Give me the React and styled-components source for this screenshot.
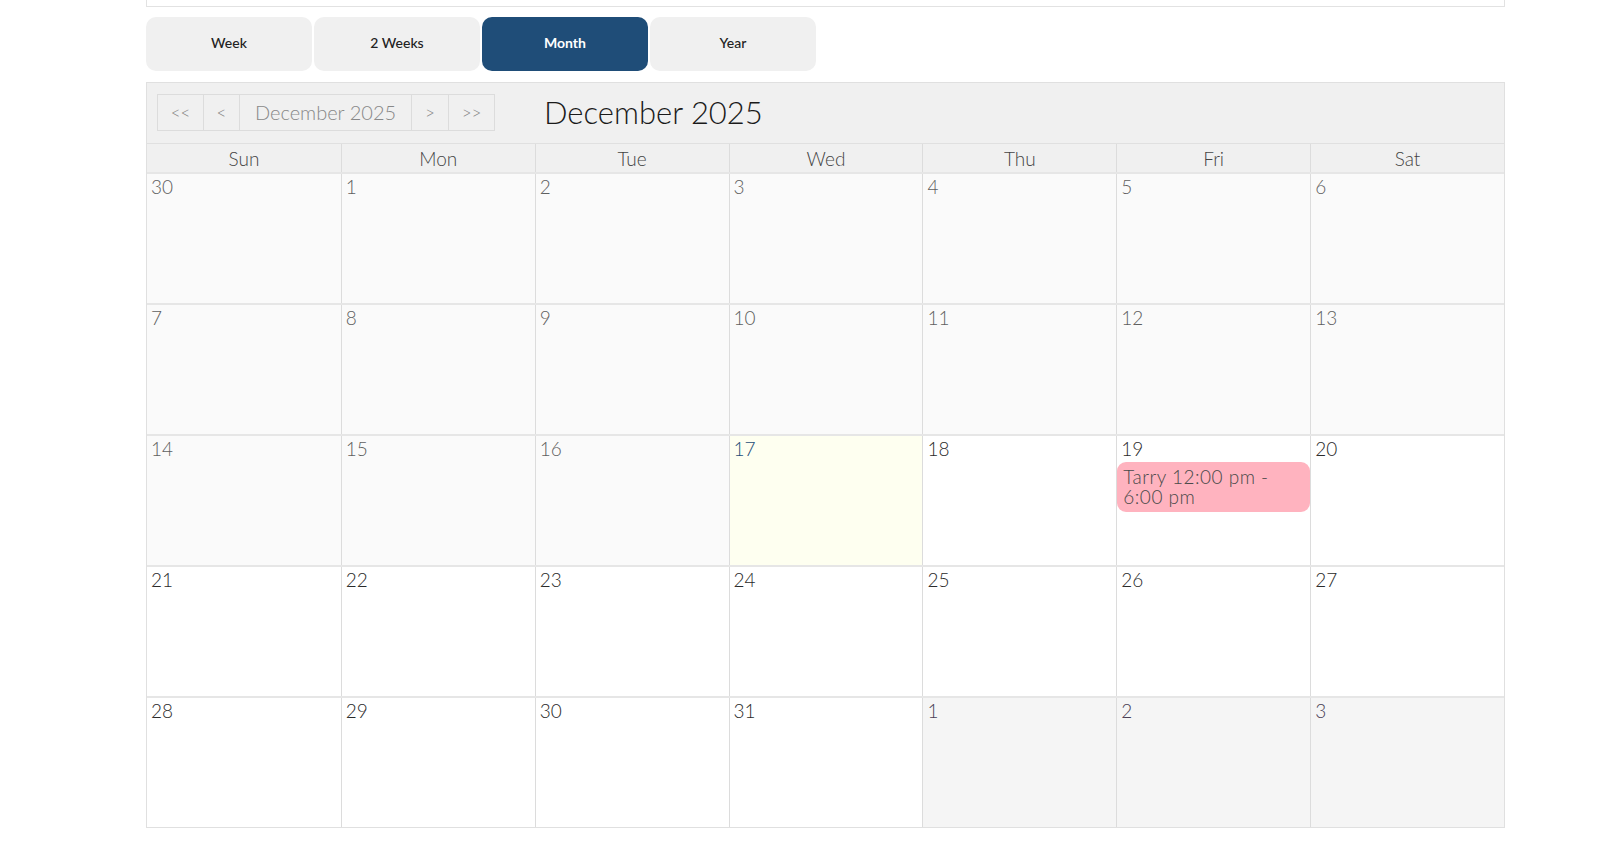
import React, { useState } from "react";
import styled, { createGlobalStyle } from "styled-components";

const GlobalStyle = createGlobalStyle`
  body {
    margin: 0;
    background: #ffffff;
    font-family: "Lato", "Noto Sans", sans-serif;
  }
`;

const Page = styled.div`
  width: 1359px;
  margin-left: 146px;
`;

const TopBox = styled.div`
  height: 6px;
  border: 1px solid #e2e2e2;
  border-top: none;
`;

const ViewBar = styled.div`
  display: flex;
  gap: 2px;
  margin: 10px 0 11px;
`;

const ViewBtn = styled.button`
  width: 166px;
  height: 54px;
  border: none;
  border-radius: 10px;
  padding: 0 0 3px;
  font-family: "Lato", "Noto Sans", sans-serif;
  font-size: 14px;
  font-weight: ${(p) => (p.active ? 700 : 500)};
  color: ${(p) => (p.active ? "#ffffff" : "#222")};
  background: ${(p) => (p.active ? "#1f4d78" : "#f0f0f0")};
  cursor: pointer;
`;

const Calendar = styled.div`
  border: 1px solid #e0e0e0;
`;

const Toolbar = styled.div`
  display: flex;
  align-items: center;
  height: 60px;
  padding-left: 11px;
  background: #f0f0f0;
`;

const NavGroup = styled.div`
  display: flex;
  margin-top: -2px;
`;

const NavBtn = styled.button`
  width: ${(p) => p.w}px;
  height: 37px;
  border: 1px solid #dcdcdc;
  margin-left: -1px;
  background: #f0f0f0;
  color: #888;
  font-family: "Lato", "Noto Sans", sans-serif;
  font-size: ${(p) => (p.label ? 20 : 17)}px;
  font-weight: 300;
  padding: 0;
  cursor: pointer;
`;

const Title = styled.h2`
  margin: -3px 0 0 49px;
  font-size: 31px;
  font-weight: 300;
  color: #1a1a1a;
`;

const HeadRow = styled.div`
  display: grid;
  grid-template-columns: repeat(7, 1fr);
  height: 28px;
  background: #f0f0f0;
  border-top: 1px solid #e0e0e0;
`;

const HeadCell = styled.div`
  display: flex;
  align-items: center;
  justify-content: center;
  font-size: 19px;
  font-weight: 300;
  color: #444;
  border-left: ${(p) => (p.first ? "none" : "1px solid #dcdcdc")};
`;

const Week = styled.div`
  display: grid;
  grid-template-columns: repeat(7, 1fr);
  height: 129px;
  border-top: 2px solid #e6e6e6;
`;

const tones = {
  past: { bg: "#fafafa", fg: "#5f5f5f" },
  today: { bg: "#fefff0", fg: "#1f4d78" },
  future: { bg: "#ffffff", fg: "#2a2a2a" },
  next: { bg: "#f5f5f5", fg: "#4a3f55" },
};

const Cell = styled.div`
  display: flex;
  flex-direction: column;
  padding: 2px 0 0 4px;
  background: ${(p) => tones[p.tone].bg};
  border-left: ${(p) => (p.first ? "none" : "1px solid #dcdcdc")};
  min-width: 0;
`;

const DayNum = styled.span`
  font-size: 19px;
  font-weight: 300;
  line-height: 22px;
  color: ${(p) => tones[p.tone].fg};
`;

const Event = styled.div`
  margin: 2px 0 0 -4px;
  padding: 5px 12px 5px 6px;
  border-radius: 9px;
  background: #ffb3bf;
  color: #4a4a4a;
  font-size: 19px;
  font-weight: 300;
  line-height: 20px;
  letter-spacing: 0.5px;
`;

const days = ["Sun", "Mon", "Tue", "Wed", "Thu", "Fri", "Sat"];

function buildWeeks() {
  const list = [{ d: 30, tone: "past" }];
  for (let d = 1; d <= 31; d++) {
    list.push({ d, tone: d < 17 ? "past" : d === 17 ? "today" : "future" });
  }
  for (let d = 1; d <= 3; d++) list.push({ d, tone: "next" });
  const weeks = [];
  for (let i = 0; i < list.length; i += 7) weeks.push(list.slice(i, i + 7));
  return weeks;
}

export default function App() {
  const [view, setView] = useState("Month");
  const weeks = buildWeeks();

  return (
    <Page>
      <GlobalStyle />
      <TopBox />
      <ViewBar>
        {["Week", "2 Weeks", "Month", "Year"].map((v) => (
          <ViewBtn key={v} active={view === v} onClick={() => setView(v)}>
            {v}
          </ViewBtn>
        ))}
      </ViewBar>

      <Calendar>
        <Toolbar>
          <NavGroup>
            <NavBtn w={47}>&lt;&lt;</NavBtn>
            <NavBtn w={37}>&lt;</NavBtn>
            <NavBtn w={173} label>
              December 2025
            </NavBtn>
            <NavBtn w={38}>&gt;</NavBtn>
            <NavBtn w={47}>&gt;&gt;</NavBtn>
          </NavGroup>
          <Title>December 2025</Title>
        </Toolbar>
        <HeadRow>
          {days.map((d, i) => (
            <HeadCell key={d} first={i === 0}>
              {d}
            </HeadCell>
          ))}
        </HeadRow>
        {weeks.map((w, wi) => (
          <Week key={wi}>
            {w.map((c, ci) => (
              <Cell key={ci} tone={c.tone} first={ci === 0}>
                <DayNum tone={c.tone}>{c.d}</DayNum>
                {c.d === 19 && c.tone === "future" && (
                  <Event>Tarry 12:00 pm - 6:00 pm</Event>
                )}
              </Cell>
            ))}
          </Week>
        ))}
      </Calendar>
    </Page>
  );
}
